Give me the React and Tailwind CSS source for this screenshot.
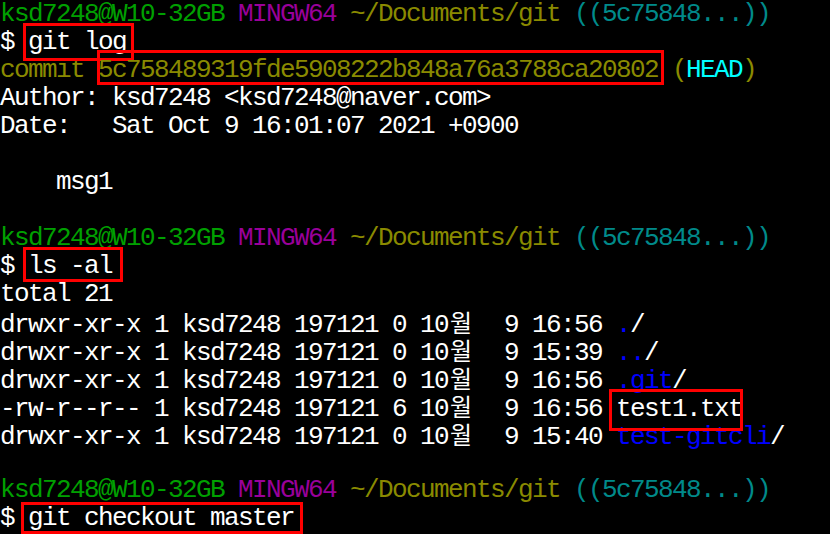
import React from "react";

const G = "text-[#00a000]";
const M = "text-[#9a009a]";
const Y = "text-[#8a8a00]";
const T = "text-[#008a8a]";
const W = "text-white";
const C = "text-[#00ffff]";
const B = "text-[#0000ff]";

const WOL = "월";

const prompt = [
  ["ksd7248@W10-32GB ", G],
  ["MINGW64 ", M],
  ["~/Documents/git ", Y],
  ["((5c75848...))", T],
];

const lsRow = (perm, size, time, name, nameColor, slash, box) => [
  [`${perm} 1 ksd7248 197121 ${size} 10`, W],
  [WOL, W, "kr"],
  [`  9 ${time} `, W],
  [name, nameColor, box],
  ...(slash ? [[slash, W]] : []),
];

const lines = [
  prompt,
  [["$ ", W], ["git log", W, "-left-[5px] -right-[8px] -top-[5px] -bottom-[5px]"]],
  [
    ["commit ", Y],
    ["5c758489319fde5908222b848a76a3788ca20802", Y, "-left-[1px] -right-[6px] -top-[6px] -bottom-[1px]"],
    [" (", Y],
    ["HEAD", C],
    [")", Y],
  ],
  [["Author: ksd7248 <ksd7248@naver.com>", W]],
  [["Date:   Sat Oct 9 16:01:07 2021 +0900", W]],
  [],
  [["    msg1", W]],
  [],
  prompt,
  [["$ ", W], ["ls -al", W, "-left-[5px] -right-[11px] -top-[5px] -bottom-[2px]"]],
  [["total 21", W]],
  lsRow("drwxr-xr-x", "0", "16:56", ".", B, "/"),
  lsRow("drwxr-xr-x", "0", "15:39", "..", B, "/"),
  lsRow("drwxr-xr-x", "0", "16:56", ".git", B, "/"),
  lsRow("-rw-r--r--", "6", "16:56", "test1.txt", W, null, "-left-[7px] -right-[1px] -top-[6px] -bottom-[8px]"),
  lsRow("drwxr-xr-x", "0", "15:40", "test-gitcli", B, "/"),
  [],
  prompt,
  [["$ ", W], ["git checkout master", W, "-left-[7px] -right-[9px] -top-[2px] -bottom-[2px]"]],
];

function Seg({ s }) {
  const [text, color, extra] = s;
  if (extra === "kr") {
    return (
      <span
        className={`inline-block w-[28px] pl-[2px] text-[24px] tracking-normal leading-[28px] ${color}`}
        style={{ fontFamily: '"Noto Sans CJK KR", sans-serif' }}
      >
        {text}
      </span>
    );
  }
  if (extra) {
    return (
      <span className={`relative inline-block leading-[28px] ${color}`}>
        {text}
        <span className={`absolute border-[3px] border-[#ff0000] ${extra}`} />
      </span>
    );
  }
  return <span className={color}>{text}</span>;
}

function Line({ segs }) {
  return (
    <div className="h-[28px] leading-[28px] whitespace-pre">
      {segs.map((s, i) => (
        <Seg key={i} s={s} />
      ))}
    </div>
  );
}

export default function App() {
  return (
    <div className="w-[830px] h-[534px] bg-black overflow-hidden">
      <div
        className="flex flex-col text-[26px] tracking-[-1.602px]"
        style={{ fontFamily: '"Liberation Mono", monospace' }}
      >
        {lines.map((l, i) => (
          <Line key={i} segs={l} />
        ))}
      </div>
    </div>
  );
}
